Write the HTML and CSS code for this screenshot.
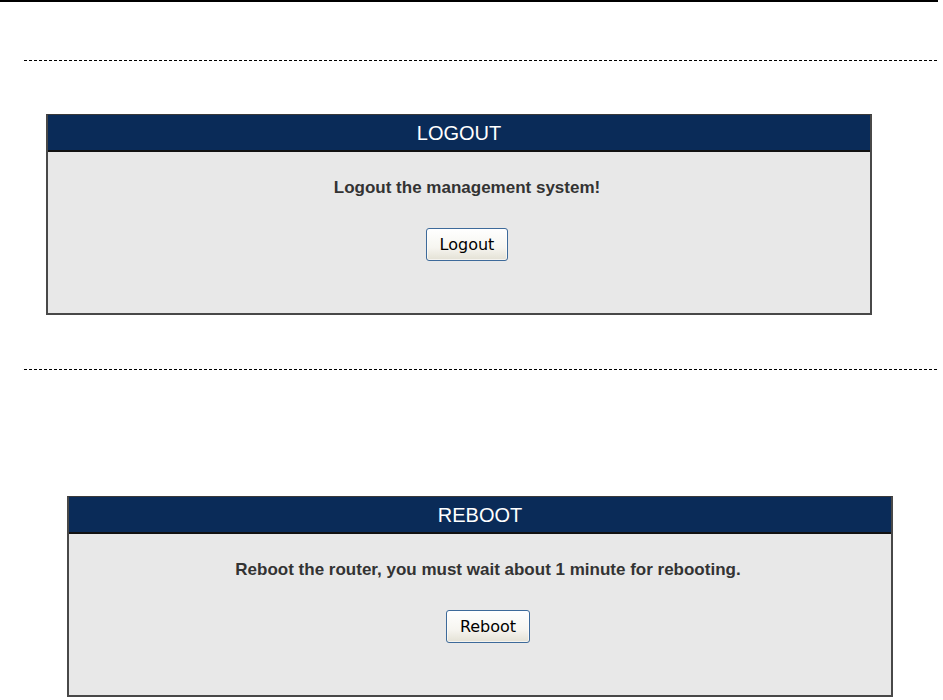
FILE: index.html
```html
<!DOCTYPE html>
<html>
<head>
<meta charset="utf-8">
<link rel="stylesheet" href="styles.css">
</head>
<body>
<div class="topbar"></div>
<div class="rule rule-first"></div>
<div class="panel panel-logout">
  <div class="panel-head">LOGOUT</div>
  <div class="panel-body">
    <p class="panel-msg">Logout the management system!</p>
    <button class="xp-btn" type="button">Logout</button>
  </div>
</div>
<div class="rule rule-second"></div>
<div class="panel panel-reboot">
  <div class="panel-head">REBOOT</div>
  <div class="panel-body">
    <p class="panel-msg">Reboot the router, you must wait about 1 minute for rebooting.</p>
    <button class="xp-btn" type="button">Reboot</button>
  </div>
</div>
</body>
</html>
```
FILE: styles.css
```css
html, body {
  margin: 0;
  padding: 0;
  background: #ffffff;
}

body {
  font-family: "Liberation Sans", Arial, sans-serif;
}

.topbar {
  height: 2px;
  background: #000000;
  margin-right: 5px;
}

.rule {
  height: 1px;
  margin-left: 24px;
  width: 914px;
  background: repeating-linear-gradient(to right, #000 0 3px, transparent 3px 5px);
}

.rule-first {
  margin-top: 58px;
}

.rule-second {
  margin-top: 54px;
}

.panel {
  box-sizing: border-box;
  width: 826px;
  border: 2px solid #484848;
  border-top: 1px solid #3a3a3a;
  background: #e8e8e8;
}

.panel-logout {
  margin-top: 53px;
  margin-left: 46px;
}

.panel-reboot {
  margin-top: 126px;
  margin-left: 67px;
}

.panel-head {
  height: 35px;
  line-height: 36px;
  background: #0a2b58;
  color: #ffffff;
  text-align: center;
  font-size: 20px;
  border-bottom: 2px solid #111111;
}

.panel-body {
  height: 161px;
  box-sizing: border-box;
  padding-top: 26px;
  padding-left: 16px;
  text-align: center;
}

.panel-msg {
  margin: 0;
  font-size: 17px;
  line-height: 20px;
  font-weight: bold;
  color: #333333;
}

.xp-btn {
  margin-top: 30px;
  height: 33px;
  padding: 0 13px;
  font-family: Tahoma, "DejaVu Sans", sans-serif;
  font-size: 16px;
  color: #000000;
  border: 1px solid #3d6a9a;
  border-radius: 3px;
  background: linear-gradient(to bottom, #ffffff 0%, #f6f5f0 60%, #e4e1d5 100%);
  box-shadow: inset 0 0 0 1px rgba(255,255,255,0.6);
}
```
